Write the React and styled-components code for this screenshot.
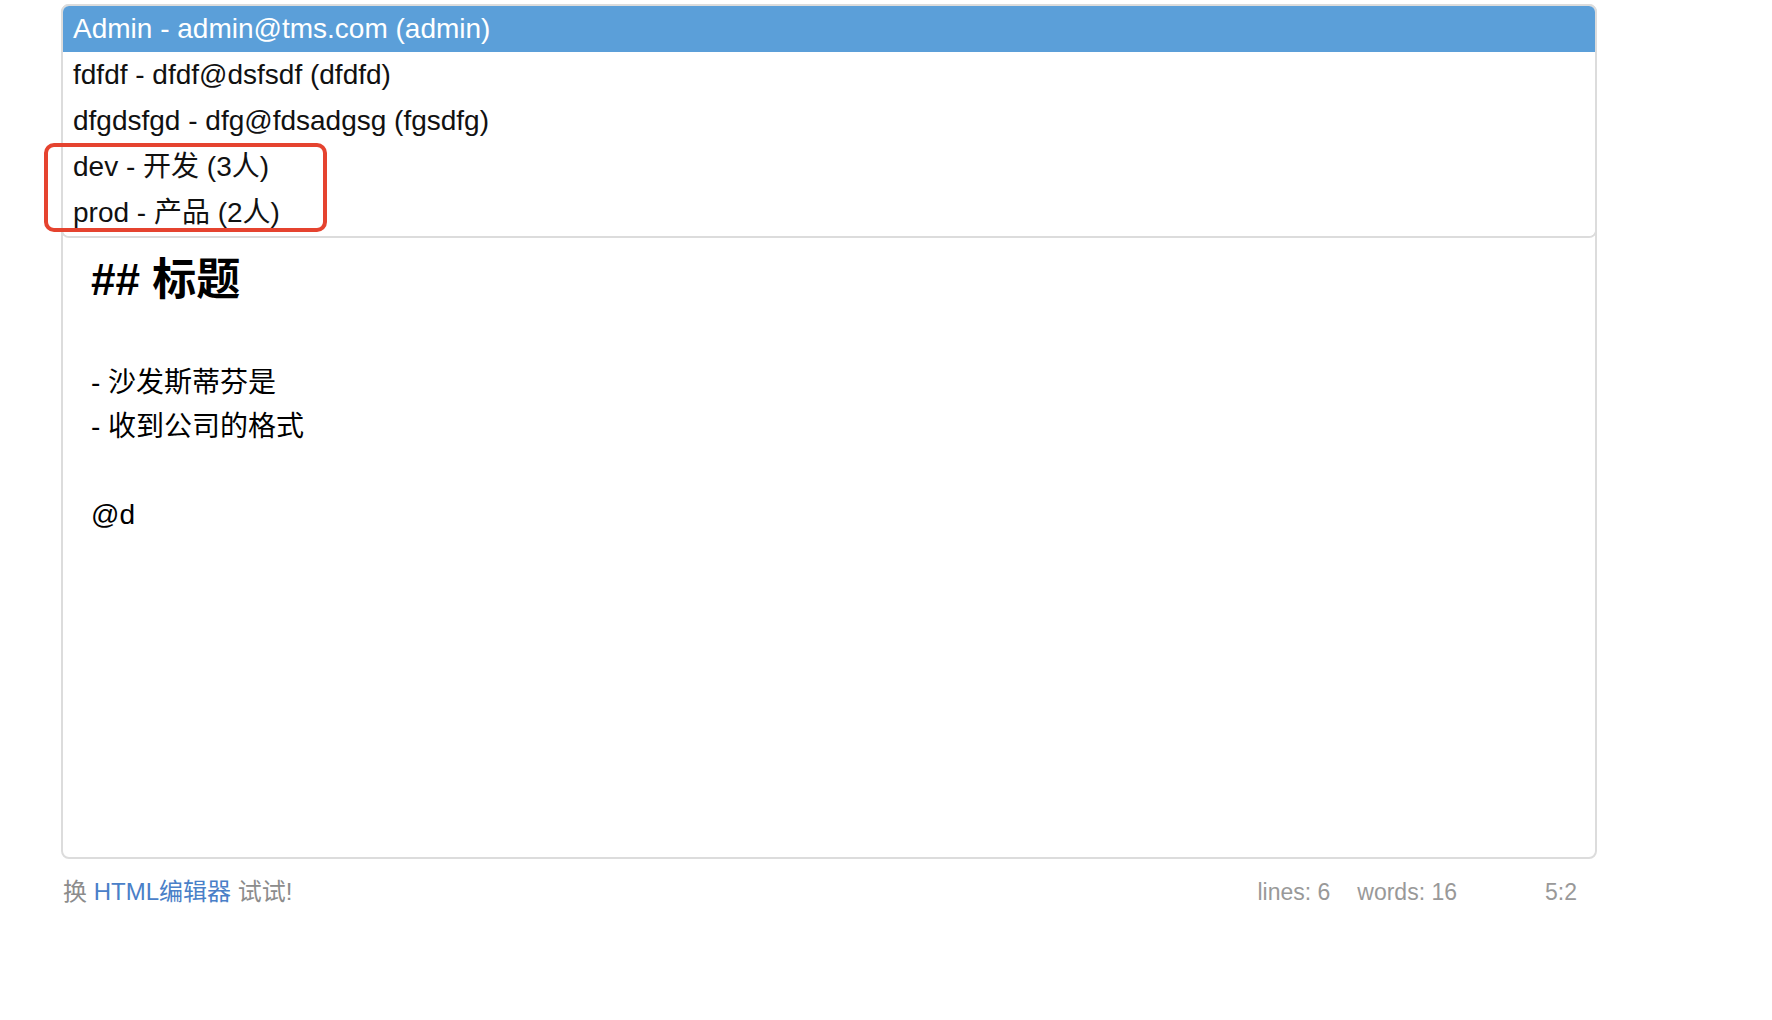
import React from "react";
import styled, { createGlobalStyle } from "styled-components";

const GlobalStyle = createGlobalStyle`
  html, body {
    margin: 0;
    padding: 0;
    background: #fff;
  }
  body {
    font-family: "Liberation Sans", "Noto Sans CJK SC", sans-serif;
  }
`;

const users = [
  "Admin - admin@tms.com (admin)",
  "fdfdf - dfdf@dsfsdf (dfdfd)",
  "dfgdsfgd - dfg@fdsadgsg (fgsdfg)",
  "dev - 开发 (3人)",
  "prod - 产品 (2人)",
];

const lines = [
  { text: "## 标题", heading: true },
  { text: "" },
  { text: "- 沙发斯蒂芬是" },
  { text: "- 收到公司的格式" },
  { text: "" },
  { text: "@d" },
];

export default function App() {
  return (
    <Page>
      <GlobalStyle />
      <EditorWrap>
        <Editor>
          <Content>
            {lines.map((l, i) => (
              <Line key={i} heading={l.heading}>
                {l.text || "\u00a0"}
              </Line>
            ))}
          </Content>
        </Editor>
        <Menu>
          {users.map((u, i) => (
            <MenuItem key={u} active={i === 0}>
              {u}
            </MenuItem>
          ))}
        </Menu>
        <Highlight />
      </EditorWrap>
      <Footer>
        <Switch>
          换 <a href="#">HTML编辑器</a> 试试!
        </Switch>
        <Stats>
          <span>lines: 6</span>
          <span>words: 16</span>
          <Cursor>5:2</Cursor>
        </Stats>
      </Footer>
    </Page>
  );
}

const Page = styled.div`
  padding: 4px 0 0 61px;
  width: 1536px;
`;

const EditorWrap = styled.div`
  position: relative;
`;

const Editor = styled.div`
  height: 851px;
  border: 2px solid #dcdcdc;
  border-radius: 8px;
  background: #fff;
`;

const Content = styled.div`
  padding: 237px 28px 0;
  color: #000;
`;

const Line = styled.div`
  font-size: ${p => (p.heading ? "44px" : "28px")};
  font-weight: ${p => (p.heading ? 700 : 400)};
  line-height: ${p => (p.heading ? "74px" : "44px")};
`;

const Menu = styled.div`
  position: absolute;
  top: 0;
  left: 0;
  right: 0;
  border: 2px solid #dcdcdc;
  border-radius: 8px;
  overflow: hidden;
  background: #fff;
`;

const MenuItem = styled.div`
  height: 46px;
  line-height: 46px;
  padding: 0 10px;
  font-size: 28px;
  white-space: nowrap;
  color: ${p => (p.active ? "#fff" : "#111")};
  background: ${p => (p.active ? "#5b9fd9" : "#fff")};
`;

const Highlight = styled.div`
  position: absolute;
  left: -17px;
  top: 139px;
  width: 283px;
  height: 89px;
  box-sizing: border-box;
  border: 4px solid #e5432f;
  border-radius: 10px;
`;

const Footer = styled.div`
  display: flex;
  justify-content: space-between;
  align-items: center;
  margin-top: 15px;
  padding-right: 20px;
  font-size: 24px;
  line-height: 36px;
  color: #8c8c8c;
`;

const Switch = styled.div`
  padding-left: 2px;

  a {
    color: #4a80c8;
    text-decoration: none;
  }
`;

const Stats = styled.div`
  display: flex;
  gap: 27px;
  font-size: 23px;
  color: #999;
`;

const Cursor = styled.span`
  margin-left: 61px;
`;
